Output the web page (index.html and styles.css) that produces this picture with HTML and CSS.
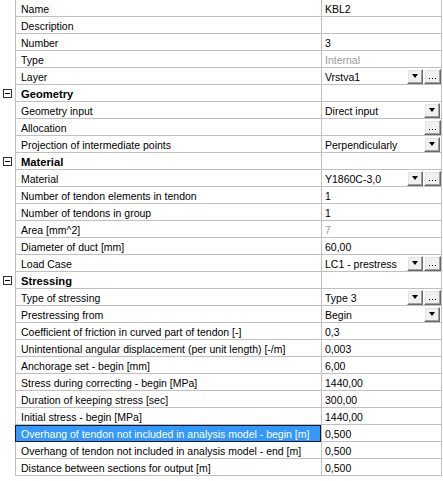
FILE: index.html
```html
<!DOCTYPE html>
<html>
<head>
<meta charset="utf-8">
<link rel="stylesheet" href="styles.css">
</head>
<body>
<div class="grid">
  <div class="row"><div class="gut"></div><div class="lab">Name</div><div class="val"><span class="txt">KBL2</span></div></div>
  <div class="row"><div class="gut"></div><div class="lab">Description</div><div class="val"><span class="txt"></span></div></div>
  <div class="row"><div class="gut"></div><div class="lab">Number</div><div class="val"><span class="txt">3</span></div></div>
  <div class="row"><div class="gut"></div><div class="lab">Type</div><div class="val"><span class="txt dim">Internal</span></div></div>
  <div class="row"><div class="gut"></div><div class="lab">Layer</div><div class="val"><span class="txt">Vrstva1</span><span class="btn dd"><i class="tri"></i></span><span class="sep"></span><span class="btn el"><i class="dots"></i></span></div></div>

  <div class="row"><div class="gut"><span class="box"><i class="minus"></i></span></div><div class="lab hd">Geometry</div><div class="val"><span class="txt"></span></div></div>
  <div class="row"><div class="gut"></div><div class="lab">Geometry input</div><div class="val"><span class="txt">Direct input</span><span class="btn dd"><i class="tri"></i></span><span class="end"></span></div></div>
  <div class="row"><div class="gut"></div><div class="lab">Allocation</div><div class="val"><span class="txt"></span><span class="btn el"><i class="dots"></i></span></div></div>
  <div class="row"><div class="gut"></div><div class="lab">Projection of intermediate points</div><div class="val"><span class="txt">Perpendicularly</span><span class="btn dd"><i class="tri"></i></span><span class="end"></span></div></div>

  <div class="row"><div class="gut"><span class="box"><i class="minus"></i></span></div><div class="lab hd">Material</div><div class="val"><span class="txt"></span></div></div>
  <div class="row"><div class="gut"></div><div class="lab">Material</div><div class="val"><span class="txt">Y1860C-3,0</span><span class="btn dd"><i class="tri"></i></span><span class="sep"></span><span class="btn el"><i class="dots"></i></span></div></div>
  <div class="row"><div class="gut"></div><div class="lab">Number of tendon elements in tendon</div><div class="val"><span class="txt">1</span></div></div>
  <div class="row"><div class="gut"></div><div class="lab">Number of tendons in group</div><div class="val"><span class="txt">1</span></div></div>
  <div class="row"><div class="gut"></div><div class="lab">Area [mm^2]</div><div class="val"><span class="txt dim">7</span></div></div>
  <div class="row"><div class="gut"></div><div class="lab">Diameter of duct [mm]</div><div class="val"><span class="txt">60,00</span></div></div>
  <div class="row"><div class="gut"></div><div class="lab">Load Case</div><div class="val"><span class="txt">LC1 - prestress</span><span class="btn dd"><i class="tri"></i></span><span class="sep"></span><span class="btn el"><i class="dots"></i></span></div></div>

  <div class="row"><div class="gut"><span class="box"><i class="minus"></i></span></div><div class="lab hd">Stressing</div><div class="val"><span class="txt"></span></div></div>
  <div class="row"><div class="gut"></div><div class="lab">Type of stressing</div><div class="val"><span class="txt">Type 3</span><span class="btn dd"><i class="tri"></i></span><span class="sep"></span><span class="btn el"><i class="dots"></i></span></div></div>
  <div class="row"><div class="gut"></div><div class="lab">Prestressing from</div><div class="val"><span class="txt">Begin</span><span class="btn dd"><i class="tri"></i></span><span class="end"></span></div></div>
  <div class="row"><div class="gut"></div><div class="lab">Coefficient of friction in curved part of tendon [-]</div><div class="val"><span class="txt">0,3</span></div></div>
  <div class="row"><div class="gut"></div><div class="lab">Unintentional angular displacement (per unit length) [-/m]</div><div class="val"><span class="txt">0,003</span></div></div>
  <div class="row"><div class="gut"></div><div class="lab">Anchorage set - begin [mm]</div><div class="val"><span class="txt">6,00</span></div></div>
  <div class="row"><div class="gut"></div><div class="lab">Stress during correcting - begin [MPa]</div><div class="val"><span class="txt">1440,00</span></div></div>
  <div class="row"><div class="gut"></div><div class="lab">Duration of keeping stress [sec]</div><div class="val"><span class="txt">300,00</span></div></div>
  <div class="row"><div class="gut"></div><div class="lab">Initial stress - begin [MPa]</div><div class="val"><span class="txt">1440,00</span></div></div>
  <div class="row"><div class="gut"></div><div class="lab sel">Overhang of tendon not included in analysis model - begin [m]</div><div class="val"><span class="txt">0,500</span></div></div>
  <div class="row"><div class="gut"></div><div class="lab">Overhang of tendon not included in analysis model - end [m]</div><div class="val"><span class="txt">0,500</span></div></div>
  <div class="row"><div class="gut"></div><div class="lab">Distance between sections for output [m]</div><div class="val"><span class="txt">0,500</span></div></div>
</div>
</body>
</html>
```

FILE: styles.css
```css
html, body {
  margin: 0;
  padding: 0;
  background: #ffffff;
}

.grid {
  width: 442px;
  font-family: "Liberation Sans", Arial, sans-serif;
  font-size: 10.5px;
  color: #000000;
}

.row {
  display: flex;
  height: 17px;
}

.gut {
  width: 15px;
  flex: none;
  height: 17px;
  box-sizing: border-box;
  padding: 4px 0 0 3px;
}

.box {
  display: flex;
  align-items: center;
  justify-content: center;
  width: 9px;
  height: 9px;
  box-sizing: border-box;
  border: 1px solid #303030;
  background: #ffffff;
}

.minus {
  display: block;
  width: 5px;
  height: 1px;
  background: #000000;
}

.lab {
  width: 300px;
  flex: none;
  height: 14px;
  line-height: 14px;
  padding: 2px 0 0 5px;
  border-left: 1px solid #c0c0c0;
  border-bottom: 1px solid #c0c0c0;
  white-space: nowrap;
  overflow: hidden;
}

.hd {
  font-weight: bold;
  font-size: 11.2px;
}

.sel {
  background: #3399ff;
  color: #ffffff;
  outline: 1px solid #101820;
  outline-offset: -1px;
}

.val {
  width: 119px;
  flex: none;
  height: 16px;
  display: flex;
  border-left: 1px solid #c0c0c0;
  border-right: 1px solid #c0c0c0;
  border-bottom: 1px solid #c0c0c0;
}

.txt {
  flex: 1;
  min-width: 0;
  height: 14px;
  line-height: 14px;
  padding: 2px 0 0 3px;
  white-space: nowrap;
  overflow: hidden;
}

.dim {
  color: #999999;
}

.btn {
  flex: none;
  height: 15px;
  margin-top: 1px;
  box-sizing: border-box;
  background: #f0f0f0;
  border-top: 1px solid #ffffff;
  border-left: 1px solid #ffffff;
  border-right: 1px solid #696969;
  border-bottom: 1px solid #696969;
  box-shadow: inset -1px -1px 0 #a0a0a0, inset 1px 1px 0 #e3e3e3;
  display: flex;
  justify-content: center;
}

.dd {
  width: 16px;
}

.el {
  width: 17px;
}

.sep {
  flex: none;
  width: 1px;
}

.end {
  flex: none;
  width: 1px;
}

.tri {
  display: block;
  width: 0;
  height: 0;
  margin-top: 4px;
  border-left: 3.5px solid transparent;
  border-right: 3.5px solid transparent;
  border-top: 4px solid #000000;
}

.dots {
  display: block;
  width: 7px;
  height: 1px;
  margin-top: 8px;
  background: linear-gradient(to right, #000 0 1px, transparent 1px 3px, #000 3px 4px, transparent 4px 6px, #000 6px 7px);
}
```
